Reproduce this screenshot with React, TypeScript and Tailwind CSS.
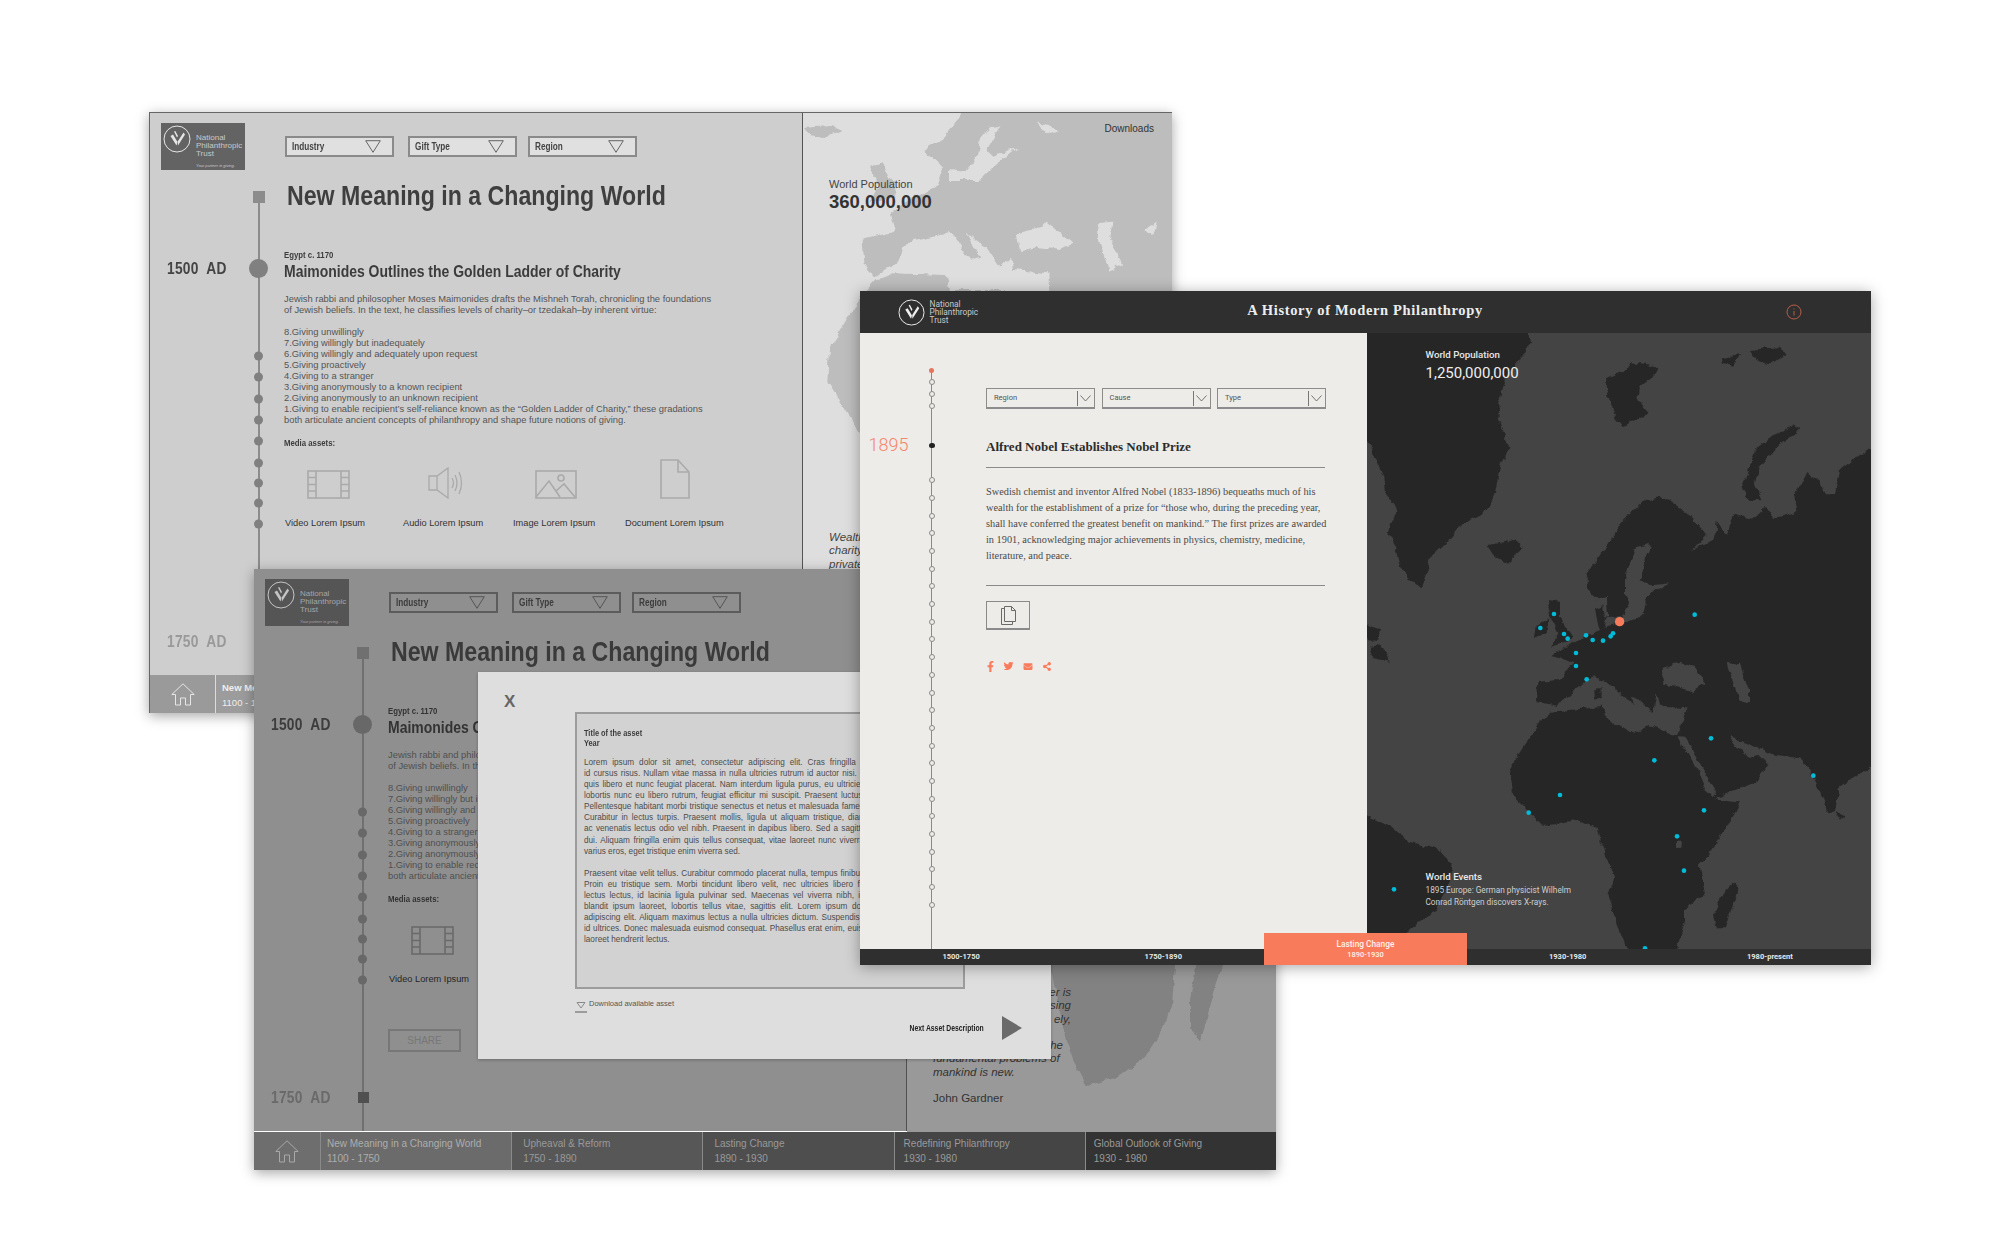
import { FaFacebookF, FaTwitter, FaEnvelope, FaShareAlt } from "react-icons/fa";

const ROBOTO = "[font-family:Roboto,sans-serif]";
const SERIF = "[font-family:'Liberation_Serif',serif]";
const NARROW_L = "w-max origin-left scale-x-[0.82] whitespace-nowrap font-bold";

type Tone = {
  panel: string; map: string; logoBox: string; logoText: string; logoStroke: string;
  ddBox: string; ddText: string; ddStroke: string; title: string; year: string; year2: string;
  sub: string; body: string; label: string; icon: string; line: string; dot: string; square: string; square2: string;
  rule: string; share: string; quote: string;
};

const LIGHT: Tone = {
  panel: "bg-[#cecece]", map: "bg-[#dedede]", logoBox: "bg-[#636363]", logoText: "text-[#c8c8c8]", logoStroke: "#e6e6e6",
  ddBox: "bg-[#e0e0e0] border-[#8a8a8a]", ddText: "text-[#444]", ddStroke: "#666",
  title: "text-[#3f3f3f]", year: "text-[#444]", year2: "text-[#999]", sub: "text-[#3c3c3c]", body: "text-[#555]", label: "text-[#333]", icon: "#aaaaaa",
  line: "bg-[#8c8c8c]", dot: "bg-[#808080]", square: "bg-[#8c8c8c]", square2: "bg-[#8c8c8c]", rule: "bg-[#555]", share: "border-[#999] text-[#999]", quote: "text-[#444]",
};
const DARK: Tone = {
  panel: "bg-[#8f8f8f]", map: "bg-[#999]", logoBox: "bg-[#555]", logoText: "text-[#a6a6a6]", logoStroke: "#c4c4c4",
  ddBox: "bg-[#8f8f8f] border-[#5c5c5c]", ddText: "text-[#3c3c3c]", ddStroke: "#555",
  title: "text-[#3a3a3a]", year: "text-[#3c3c3c]", year2: "text-[#6a6a6a]", sub: "text-[#333]", body: "text-[#505050]", label: "text-[#262626]", icon: "#6a6a6a",
  line: "bg-[#707070]", dot: "bg-[#686868]", square: "bg-[#707070]", square2: "bg-[#505050]", rule: "bg-[#505050]", share: "border-[#777] text-[#777]", quote: "text-[#333]",
};

function Mark({ stroke, size }: { stroke: string; size: number }) {
  return (
    <svg width={size} height={size} viewBox="0 0 28 28" className="shrink-0">
      <circle cx="14" cy="14" r="13" fill="none" stroke={stroke} strokeWidth="1" />
      <path d="M7.5 11 L10 9.5 L14.5 17 L13.5 20.5 Z" fill={stroke} />
      <path d="M20.5 7.5 L22 9.5 L15 20.5 L14.7 16.5 Z" fill={stroke} />
      <path d="M11 6.5 L12.3 6 L15 11 L14 12.5 Z" fill={stroke} />
    </svg>
  );
}

function Dropdown({ label, tone }: { label: string; tone: Tone }) {
  return (
    <div className={`flex h-[21px] w-[109px] items-center justify-between border-2 pl-[5px] pr-[11px] ${tone.ddBox}`}>
      <span className={`${NARROW_L} text-[10px] ${tone.ddText}`}>{label}</span>
      <svg width="16" height="13" viewBox="0 0 16 13">
        <path d="M0.7 0.7 H15.3 L8 12.3 Z" fill="none" stroke={tone.ddStroke} strokeWidth="1" />
      </svg>
    </div>
  );
}

function VideoIcon({ c }: { c: string }) {
  return (
    <svg width="43" height="29" viewBox="0 0 43 29" fill="none" stroke={c} strokeWidth="1.6">
      <rect x="1" y="1" width="41" height="27" />
      <path d="M9 1 V28 M34 1 V28 M1 7.5 H9 M1 14.5 H9 M1 21 H9 M34 7.5 H42 M34 14.5 H42 M34 21 H42" />
    </svg>
  );
}
function AudioIcon({ c }: { c: string }) {
  return (
    <svg width="37" height="32" viewBox="0 0 37 32" fill="none" stroke={c} strokeWidth="1.3">
      <path d="M1 9 H9 L20 1 V31 L9 23 H1 Z M9 9 V23" />
      <path d="M24 11 Q27 16 24 21 M27 8 Q31 16 27 24 M31 5 Q36 16 31 27" />
    </svg>
  );
}
function ImageIcon({ c }: { c: string }) {
  return (
    <svg width="42" height="29" viewBox="0 0 42 29" fill="none" stroke={c} strokeWidth="1.6">
      <rect x="1" y="1" width="40" height="27" />
      <path d="M1 27 L14 11 L25 27 M21 21 L29 14 L40 27" />
      <circle cx="26" cy="8" r="3" />
    </svg>
  );
}
function DocIcon({ c }: { c: string }) {
  return (
    <svg width="30" height="40" viewBox="0 0 30 40" fill="none" stroke={c} strokeWidth="1.6">
      <path d="M1 1 H18 L29 13 V39 H1 Z M18 1 V13 H29" />
    </svg>
  );
}
function HomeIcon({ c }: { c: string }) {
  return (
    <svg width="24" height="23" viewBox="0 0 24 23" fill="none" stroke={c} strokeWidth="1">
      <path d="M0.8 11.5 L12 0.8 L23.2 11.5 H19.5 V22 H14.5 V15 H9.5 V22 H4.5 V11.5 Z" />
    </svg>
  );
}

const SMALL_DOTS = [242.7, 264.3, 286.3, 307, 327.7, 349.7, 370.3, 390.3, 411.3];

function Timeline({ tone }: { tone: Tone }) {
  return (
    <>
      <div className={`absolute left-[108px] top-[78px] bottom-0 w-[2px] ${tone.line}`} />
      <div className={`absolute left-[103px] top-[78px] h-[12px] w-[12px] ${tone.square}`} />
      <div className={`absolute left-[103.5px] top-[523px] h-[11px] w-[11px] ${tone.square2}`} />
      <div className={`absolute left-[99px] top-[146px] h-[19px] w-[19px] rounded-full ${tone.dot}`} />
      {SMALL_DOTS.map((t) => (
        <div key={t} className={`absolute left-[104px] h-[9px] w-[9px] -translate-y-1/2 rounded-full ${tone.dot}`} style={{ top: t }} />
      ))}
      <div className={`absolute left-[16.5px] top-[146px] w-max origin-left scale-x-[0.81] text-[17px] font-bold leading-[20px] tracking-[0.3px] whitespace-pre ${tone.year}`}>1500  AD</div>
      <div className={`absolute left-[16.5px] top-[519px] w-max origin-left scale-x-[0.81] text-[17px] font-bold leading-[20px] tracking-[0.3px] whitespace-pre ${tone.year2}`}>1750  AD</div>
    </>
  );
}

function HistoryPanel({ tone }: { tone: Tone }) {
  return (
    <div className={`relative flex h-[562px] w-[653px] shrink-0 ${tone.panel}`}>
      <div className="relative h-full w-[134px] shrink-0">
        <Timeline tone={tone} />
        <div className={`relative ml-[11px] mt-[10px] flex h-[47px] w-[84px] flex-col justify-between py-[2px] pl-[2px] ${tone.logoBox}`}>
          <div className="flex items-start gap-[5px]">
            <Mark stroke={tone.logoStroke} size={28} />
            <div className={`mt-[9px] text-[8px] leading-[8px] ${tone.logoText}`}>National<br />Philanthropic<br />Trust</div>
          </div>
          <div className={`ml-[33px] text-[4px] italic leading-[5px] ${tone.logoText}`}>Your partner in giving.</div>
        </div>
      </div>
      <div className="min-w-0 flex-1">
        <div className="ml-px mt-[23px] flex">
          <Dropdown label="Industry" tone={tone} />
          <div className="ml-[14px]"><Dropdown label="Gift Type" tone={tone} /></div>
          <div className="ml-[11px]"><Dropdown label="Region" tone={tone} /></div>
        </div>
        <h1 className={`ml-[3px] mt-[24px] w-max origin-left scale-x-[0.857] text-[27px] font-bold leading-[30px] whitespace-nowrap ${tone.title}`}>New Meaning in a Changing World</h1>
        <div className={`mt-[37.5px] ${NARROW_L} text-[9.5px] leading-[11px] ${tone.sub}`}>Egypt c. 1170</div>
        <h2 className={`mt-[2.5px] w-max origin-left scale-x-[0.873] text-[16px] font-bold leading-[20px] whitespace-nowrap ${tone.sub}`}>Maimonides Outlines the Golden Ladder of Charity</h2>
        <div className={`mt-[11px] text-[9.4px] leading-[11.1px] whitespace-nowrap ${tone.body}`}>
          Jewish rabbi and philosopher Moses Maimonides drafts the Mishneh Torah, chronicling the foundations<br />
          of Jewish beliefs. In the text, he classifies levels of charity–or tzedakah–by inherent virtue:
          <div className="mt-[10.5px]">
            8.Giving unwillingly<br />
            7.Giving willingly but inadequately<br />
            6.Giving willingly and adequately upon request<br />
            5.Giving proactively<br />
            4.Giving to a stranger<br />
            3.Giving anonymously to a known recipient<br />
            2.Giving anonymously to an unknown recipient<br />
            1.Giving to enable recipient’s self-reliance known as the “Golden Ladder of Charity,” these gradations<br />
            both articulate ancient concepts of philanthropy and shape future notions of giving.
          </div>
        </div>
        <div className={`mt-[11px] ${NARROW_L} text-[9.5px] leading-[11px] ${tone.sub}`}>Media assets:</div>
        <div className="ml-px mt-[11px] flex">
          <div className="w-[80px]">
            <div className="flex h-[40px] items-end justify-center pl-[7px]"><VideoIcon c={tone.icon} /></div>
            <div className={`mt-[19px] text-[9.25px] leading-[11px] whitespace-nowrap ${tone.label}`}>Video Lorem Ipsum</div>
          </div>
          <div className="ml-[38px] w-[80px]">
            <div className="flex h-[40px] items-end justify-center pl-[7px]"><AudioIcon c={tone.icon} /></div>
            <div className={`mt-[19px] text-[9.25px] leading-[11px] whitespace-nowrap ${tone.label}`}>Audio Lorem Ipsum</div>
          </div>
          <div className="ml-[30px] w-[82px]">
            <div className="flex h-[40px] items-end justify-center pl-[4px]"><ImageIcon c={tone.icon} /></div>
            <div className={`mt-[19px] text-[9.25px] leading-[11px] whitespace-nowrap ${tone.label}`}>Image Lorem Ipsum</div>
          </div>
          <div className="ml-[30px] w-[99px]">
            <div className="flex h-[40px] items-end justify-center"><DocIcon c={tone.icon} /></div>
            <div className={`mt-[19px] text-[9.25px] leading-[11px] whitespace-nowrap ${tone.label}`}>Document Lorem Ipsum</div>
          </div>
        </div>
        <div className={`mt-[44px] flex h-[23px] w-[73px] items-center justify-center border-2 text-[10px] ${tone.share}`}>SHARE</div>
      </div>
      <div className={`absolute right-0 top-0 h-full w-px ${tone.rule}`} />
    </div>
  );
}

const QUOTE: [string, string][] = [
  ["Wealth", "er is"], ["charity", "sing"], ["private", "ely,"], ["", ""], ["", "he"],
];

function QuoteText({ tone }: { tone: Tone }) {
  return (
    <div className={`relative mt-[319px] ml-[26px] w-[138px] text-[11.5px] italic leading-[13.3px] ${tone.quote}`}>
      {QUOTE.map(([a, b], i) => (
        <div key={i} className={`flex h-[13.3px] justify-between ${i === 4 ? "w-[130px]" : ""}`}><span>{a}</span><span>{b}</span></div>
      ))}
      <div className="whitespace-nowrap">fundamental problems of</div>
      <div className="whitespace-nowrap">mankind is new.</div>
      <div className="mt-[13px] whitespace-nowrap not-italic">John Gardner</div>
    </div>
  );
}

function Rough({ id, freq, scale }: { id: string; freq: number; scale: number }) {
  return (
    <filter id={id} x="-5%" y="-5%" width="110%" height="110%">
      <feTurbulence type="fractalNoise" baseFrequency={freq} numOctaves={4} seed={4} />
      <feDisplacementMap in="SourceGraphic" scale={scale} xChannelSelector="R" yChannelSelector="G" />
    </filter>
  );
}

function WindowA() {
  const tone = LIGHT;
  return (
    <div className="absolute left-[149px] top-[112px] flex h-[601px] w-[1023px] flex-col border-l border-t border-[#666] shadow-[0_3px_12px_rgba(0,0,0,0.35)]">
      <div className="flex h-[562px] shrink-0">
        <HistoryPanel tone={tone} />
        <div className={`relative flex-1 overflow-hidden ${tone.map}`}>
          <svg className="absolute inset-0 h-full w-full" viewBox="803 113 369 562">
            <defs><Rough id="roughA" freq={0.03} scale={22} /></defs>
            <g transform="translate(780 100) scale(0.33333)" filter="url(#roughA)">
              <g fill="#bdbdbd">
                <path d="M560 -20 H1300 V620 H810 L805 520 L700 510 L690 470 L660 500 L620 440 L560 400 L600 470 L570 480 L515 395 L470 405 L400 420 L370 440 L350 490 L290 530 L250 490 L245 420 L345 395 L330 340 L400 290 L470 260 L490 200 L470 190 L430 150 L490 110 L540 50 Z" />
                <path d="M290 540 L340 520 L500 525 L510 570 L700 570 L240 1000 L145 850 L150 740 L235 600 Z" />
                <path d="M270 200 L310 190 L340 260 L350 290 L270 310 L300 260 Z" />
                <path d="M75 80 L150 75 L185 90 L130 115 L90 105 Z" />
              </g>
              <g fill="#dedede">
                <path d="M630 85 L660 80 L620 150 L640 170 L720 140 L650 190 L600 240 L510 240 L510 210 L555 215 L590 170 L600 120 Z" />
                <path d="M710 400 L780 385 L800 365 L880 430 L840 450 L770 440 L720 455 Z" />
                <path d="M950 370 L1000 365 L990 420 L1030 490 L985 510 L960 430 Z" />
                <path d="M1090 390 L1130 365 L1120 405 Z" />
                <path d="M770 60 L840 90 L800 100 Z" />
              </g>
            </g>
          </svg>
          <div className="relative flex h-full flex-col">
            <div className="mr-[18px] mt-[10px] self-end text-[10px] leading-[12px] text-[#333]">Downloads</div>
            <div className="ml-[26px] mt-[43px] text-[11px] leading-[13px] text-[#444]">World Population</div>
            <div className="ml-[26px] mt-px text-[18.5px] font-bold leading-[20px] text-[#333]">360,000,000</div>
            <QuoteText tone={tone} />
          </div>
        </div>
      </div>
      <div className="grid h-[38px] grid-cols-[65px_repeat(5,1fr)] gap-px bg-[#dcdcdc]">
        <div className="flex items-center justify-center bg-[#9a9a9a]"><HomeIcon c="#e6e6e6" /></div>
        <div className="bg-[#9c9c9c] pl-[6px] pt-[5px] text-[9.5px] leading-[15px] text-[#eee]">
          <div className="font-bold">New Meaning</div><div>1100 - 1750</div>
        </div>
        <div className="bg-[#999]" /><div className="bg-[#999]" /><div className="bg-[#999]" /><div className="bg-[#999]" />
      </div>
    </div>
  );
}

const NAV_B = [
  { t: "New Meaning in a Changing World", y: "1100 - 1750", c: "bg-[#6b6b6b] pl-[6px] text-[#adadad]" },
  { t: "Upheaval & Reform", y: "1750 - 1890", c: "bg-[#575757] pl-[11px] text-[#999]" },
  { t: "Lasting Change", y: "1890 - 1930", c: "bg-[#4e4e4e] pl-[11px] text-[#999]" },
  { t: "Redefining Philanthropy", y: "1930 - 1980", c: "bg-[#454545] pl-[9px] text-[#999]" },
  { t: "Global Outlook of Giving", y: "1930 - 1980", c: "bg-[#333] pl-[8px] text-[#999]" },
];

const LOREM_1 = [
  "Lorem ipsum dolor sit amet, consectetur adipiscing elit. Cras fringilla pellentesque mauris sed",
  "id cursus risus. Nullam vitae massa in nulla ultricies rutrum id auctor nisi. Integer sit amet mattis eu",
  "quis libero et nunc feugiat placerat. Nam interdum ligula purus, eu ultricies augue finibus vitae sed",
  "lobortis nunc eu libero rutrum, feugiat efficitur mi suscipit. Praesent luctus mauris eget elit semper",
  "Pellentesque habitant morbi tristique senectus et netus et malesuada fames ac turpis egestas donec",
  "Curabitur in lectus turpis. Praesent mollis, ligula ut aliquam tristique, diam ipsum tempor nulla, at",
  "ac venenatis lectus odio vel nibh. Praesent in dapibus libero. Sed a sagittis neque, vitae porta erat",
  "dui. Aliquam fringilla enim quis tellus consequat, vitae laoreet nunc viverra. Nullam at felis sed leo",
];
const LOREM_2 = [
  "Praesent vitae velit tellus. Curabitur commodo placerat nulla, tempus finibus neque ultricies non sed.",
  "Proin eu tristique sem. Morbi tincidunt libero velit, nec ultricies libero faucibus non. Quisque et",
  "lectus lectus, id lacinia ligula pulvinar sed. Maecenas vel viverra nibh, in tempus nisl. Aenean a",
  "blandit ipsum laoreet, lobortis tellus vitae, sagittis elit. Lorem ipsum dolor sit amet, consectetur",
  "adipiscing elit. Aliquam maximus lectus a nulla ultricies dictum. Suspendisse vel quam ac nisl porta",
  "id ultrices. Donec malesuada euismod consequat. Phasellus erat enim, euismod vitae mi sed, cursus",
];

function Modal() {
  return (
    <div className="absolute left-[224px] top-[103px] flex h-[387px] w-[573px] bg-[#dedede] shadow-[0_1px_3px_rgba(0,0,0,0.25)]">
      <div className="w-[97px] shrink-0 pl-[26px] pt-[21px] text-[17px] font-bold leading-[18px] text-[#666]">X</div>
      <div className="flex-1 pr-[29px] pt-[40px]">
        <div className="h-[277px] w-[390px] border-2 border-[#9c9c9c] bg-[#d2d2d2] pl-[7px] pr-[8px] pt-[13.5px] text-[#4c4c4c]">
          <div className={`${NARROW_L} text-[9px] leading-[10px] text-[#3c3c3c]`}>Title of the asset<br />Year</div>
          <div className="mt-[9.5px] text-[8.2px] leading-[11.08px]">
            {LOREM_1.map((l) => (
              <div key={l} className="whitespace-nowrap [text-align-last:justify]">{l}</div>
            ))}
            <div>varius eros, eget tristique enim viverra sed.</div>
          </div>
          <div className="mt-[11px] text-[8.2px] leading-[11.08px]">
            {LOREM_2.map((l) => (
              <div key={l} className="whitespace-nowrap [text-align-last:justify]">{l}</div>
            ))}
            <div>laoreet hendrerit lectus.</div>
          </div>
        </div>
        <div className="mt-[10px] flex h-[13px] items-start gap-[2px]">
          <svg width="12" height="12" viewBox="0 0 12 12" className="mt-[3px]">
            <path d="M2 0.5 H10 L6 6 Z" fill="none" stroke="#8a8a8a" strokeWidth="1" />
            <rect x="0" y="9" width="12" height="2" fill="#9c9c9c" />
          </svg>
          <span className="text-[7.5px] leading-[10px] text-[#555]">Download available asset</span>
        </div>
        <div className="mt-[4px] flex items-center justify-end gap-[18px]">
          <span className="w-max origin-right scale-x-[0.8] whitespace-nowrap text-[8.5px] font-bold text-[#222]">Next Asset Description</span>
          <svg width="20" height="24" viewBox="0 0 20 24"><path d="M0 0 L20 12 L0 24 Z" fill="#6a6a6a" /></svg>
        </div>
      </div>
    </div>
  );
}

function WindowB() {
  const tone = DARK;
  return (
    <div className="absolute left-[254px] top-[569px] flex h-[601px] w-[1022px] flex-col shadow-[0_3px_12px_rgba(0,0,0,0.35)]">
      <div className="flex h-[563px] shrink-0">
        <HistoryPanel tone={tone} />
        <div className={`relative flex-1 overflow-hidden ${tone.map}`}>
          <svg className="absolute inset-0 h-full w-full" viewBox="907 569 369 563">
            <defs><Rough id="roughB" freq={0.08} scale={6} /></defs>
            <g filter="url(#roughB)" fill="#828282">
              <path d="M1045 945 H1175 V965 L1172 1005 L1162 1030 L1145 1057 L1115 1078 L1087 1086 L1073 1060 L1064 1033 L1058 1000 Z" />
              <path d="M1200 945 H1222 V965 L1212 1000 L1200 1040 L1190 1030 L1190 1000 Z" />
            </g>
          </svg>
          <div className="relative flex h-full flex-col pt-[98px]">
            <QuoteText tone={tone} />
          </div>
        </div>
      </div>
      <div className="grid h-[38px] grid-cols-[66px_repeat(5,1fr)] gap-px bg-[#8a8a8a]">
        <div className="flex items-center justify-center bg-[#6e6e6e]"><HomeIcon c="#a8a8a8" /></div>
        {NAV_B.map((n) => (
          <div key={n.t} className={`pt-[4px] text-[10px] leading-[15px] whitespace-nowrap ${n.c}`}>
            <div>{n.t}</div><div>{n.y}</div>
          </div>
        ))}
      </div>
      <Modal />
    </div>
  );
}

const C_DOTS = [382.3, 394, 406, 480.3, 498, 515.7, 533.3, 551, 568.7, 586.3, 604, 621.7, 639.3, 657, 674.7, 692.5, 710.3, 728, 745.7, 763.3, 781, 798.7, 816.3, 834, 851.7, 869.3, 887, 905];

function SelectC({ label }: { label: string }) {
  return (
    <div className="flex h-[21px] w-[109px] items-center justify-between border border-b-2 border-[#8c8c8c] pl-[7px] pr-[3px]">
      <span className={`${ROBOTO} text-[7.5px] text-[#555]`}>{label}</span>
      <span className="flex h-[15px] items-center gap-[2px] border-l border-[#777] pl-[2px]">
        <svg width="11" height="7" viewBox="0 0 11 7"><path d="M0.5 0.5 L5.5 6 L10.5 0.5" fill="none" stroke="#666" strokeWidth="0.9" /></svg>
      </span>
    </div>
  );
}

function MapC() {
  const blue: [number, number][] = [
    [582, 1002], [541, 1044], [612, 1062], [623, 1076], [678, 1066], [698, 1080], [729, 1082], [752, 1069], [759, 1060], [1004, 1004],
    [648, 1119], [648, 1158], [680, 1198], [1053, 1375], [883, 1441], [600, 1545], [506, 1598], [1032, 1591], [951, 1669], [972, 1772], [102, 1828], [1360, 1487], [855, 2005],
  ];
  return (
    <svg className="absolute inset-0 h-full w-full" viewBox="1367 333 504 616">
      <defs><Rough id="roughC" freq={0.035} scale={20} /></defs>
      <g transform="translate(1360 280) scale(0.33333)">
        <g filter="url(#roughC)">
          <g fill="#282828">
            <path d="M-30 110 H500 L510 190 L480 240 L440 290 L430 320 L415 370 L420 420 L445 500 L420 560 L405 640 L370 700 L300 735 L260 790 L215 830 L185 925 L150 900 L120 860 L105 800 L85 760 L110 680 L75 640 L70 590 L20 480 L-30 470 Z" />
            <path d="M380 795 L420 790 L465 780 L488 805 L440 850 L400 825 Z" />
            <path d="M735 295 L800 270 L815 250 L860 255 L895 265 L880 290 L840 320 L835 360 L865 395 L855 415 L810 420 L795 445 L770 420 L740 340 Z" />
            <path d="M1085 235 L1140 225 L1120 260 L1090 250 Z" />
            <path d="M1170 210 L1260 200 L1280 225 L1230 250 L1190 240 Z" />
            <path d="M1310 435 L1320 450 L1260 490 L1200 560 L1185 610 L1205 660 L1170 665 L1145 625 L1165 570 L1195 500 L1240 465 L1290 445 Z" />
            <path d="M1590 480 V1458 H1532 L1440 1525 L1425 1590 L1405 1600 L1380 1545 L1355 1480 L1320 1435 L1250 1425 L1200 1405 L1150 1385 L1110 1365 L1130 1400 L1165 1435 L1195 1425 L1225 1455 L1180 1510 L1100 1540 L1065 1555 L1140 1565 L1100 1640 L1040 1730 L1020 1760 L1035 1840 L975 1890 L975 1920 L935 2070 L835 2070 L775 1950 L745 1840 L765 1790 L720 1690 L710 1640 L650 1620 L550 1638 L460 1550 L450 1465 L490 1400 L530 1340 L570 1295 L730 1280 L735 1310 L820 1360 L870 1335 L950 1365 L985 1285 L900 1280 L890 1240 L880 1300 L840 1260 L790 1215 L860 1265 L810 1250 L820 1275 L760 1220 L700 1190 L670 1210 L620 1250 L590 1280 L530 1270 L535 1205 L600 1200 L640 1150 L580 1125 L640 1085 L720 1050 L710 1020 L705 985 L730 975 L680 925 L680 880 L760 770 L790 720 L850 665 L900 650 L940 670 L1000 715 L1040 765 L990 815 L1030 790 L1065 775 L1070 725 L1100 765 L1120 700 L1175 720 L1215 680 L1240 715 L1310 695 L1300 650 L1340 575 L1375 600 L1395 640 L1425 640 L1440 570 L1500 525 Z" />
            <path d="M-30 1590 L50 1620 L110 1650 L130 1680 L240 1710 L275 1750 L270 1800 L230 1890 L190 1920 L135 1955 L100 2070 H-30 Z" />
            <path d="M1120 1810 L1135 1830 L1110 1900 L1095 1945 L1070 1945 L1062 1900 L1080 1850 Z" />
            <path d="M1432 1590 L1450 1610 L1440 1622 L1430 1610 Z" />
            <path d="M570 960 L600 965 L600 1010 L640 1070 L610 1090 L570 1100 L595 1060 L580 1030 L560 990 Z" />
            <path d="M530 1035 L565 1015 L560 1060 L525 1075 Z" />
            <path d="M-30 1015 L60 1045 L55 1080 L-30 1075 Z" />
            <path d="M30 1100 L60 1095 L90 1145 L40 1135 Z" />
            <path d="M705 1225 L722 1225 L722 1255 L708 1255 Z" />
          </g>
          <g fill="#444">
            <path d="M795 895 L825 805 L870 795 L850 850 L840 900 L880 915 L930 910 L880 935 L860 960 L850 1000 L830 1020 L730 1040 L740 1015 L790 1010 L810 970 L795 940 Z" />
            <path d="M705 960 L740 950 L745 1015 L735 1010 L730 975 Z" />
            <path d="M905 1165 L960 1145 L1000 1160 L1040 1210 L1000 1235 L950 1220 L910 1215 Z" />
            <path d="M1100 1150 L1140 1145 L1150 1190 L1170 1230 L1170 1270 L1135 1260 L1120 1210 Z" />
            <path d="M950 1368 L975 1370 L1060 1520 L1062 1552 L1040 1530 L1000 1450 Z" />
            <path d="M948 1685 L966 1685 L964 1706 L948 1707 Z" />
          </g>
        </g>
        <circle cx="779" cy="1025" r="14" fill="#f87c5c" />
        {blue.map(([x, y]) => (
          <circle key={`${x}-${y}`} cx={x} cy={y} r="7" fill="#00bcd9" />
        ))}
      </g>
    </svg>
  );
}

function WindowC() {
  return (
    <div className="absolute left-[860px] top-[291px] flex h-[674px] w-[1011px] flex-col bg-[#2f2f2f] shadow-[0_2px_14px_rgba(0,0,0,0.35)]">
      <header className="relative flex h-[42px] shrink-0 items-center pl-[38px]">
        <Mark stroke="#efefef" size={27} />
        <div className={`ml-[4.5px] ${ROBOTO} text-[8.3px] leading-[8.3px] text-[#c9c9c9]`}>National<br />Philanthropic<br />Trust</div>
        <h1 className={`-mt-[2px] ml-[269px] ${SERIF} text-[14.5px] font-bold tracking-[0.65px] text-[#ededed]`}>A History of Modern Philanthropy</h1>
        <svg className="ml-auto mr-[69px]" width="16" height="16" viewBox="0 0 16 16" fill="none" stroke="#b95e47" strokeWidth="1">
          <circle cx="8" cy="8" r="7" />
          <path d="M8 7 V11.5 M8 4.5 V5.5" />
        </svg>
      </header>
      <div className="flex min-h-0 flex-1">
        <div className="relative w-[507px] shrink-0 bg-[#edece8] pl-[126px] pt-[55px]">
          <div className="absolute left-[70.5px] top-[37px] bottom-0 w-[1.5px] bg-[#8a8a8a]" />
          <div className="absolute left-[69px] top-[35px] h-[5px] w-[5px] rounded-full bg-[#e8745a]" />
          <div className="absolute left-[69px] top-[109.5px] h-[5.5px] w-[5.5px] rounded-full bg-[#222]" />
          {C_DOTS.map((y) => (
            <div key={y} className="absolute left-[68.5px] h-[6px] w-[6px] -translate-y-1/2 rounded-full border border-[#8a8a8a] bg-[#edece8]" style={{ top: y - 333 }} />
          ))}
          <div className={`absolute left-[8.5px] top-[101px] ${ROBOTO} text-[18px] font-light leading-[22px] text-[#f5876d]`}>1895</div>
          <div className="flex w-[340px] justify-between">
            <SelectC label="Region" />
            <SelectC label="Cause" />
            <SelectC label="Type" />
          </div>
          <h2 className={`mt-[30px] ${SERIF} text-[13px] font-bold leading-[16px] text-[#2c2c2c]`}>Alfred Nobel Establishes Nobel Prize</h2>
          <div className="mt-[12px] h-px w-[339px] bg-[#8a8a8a]" />
          <p className={`mt-[16px] ${SERIF} text-[10.3px] leading-[16px] whitespace-nowrap text-[#4a4a4a]`}>
            Swedish chemist and inventor Alfred Nobel (1833-1896) bequeaths much of his<br />
            wealth for the establishment of a prize for “those who, during the preceding year,<br />
            shall have conferred the greatest benefit on mankind.” The first prizes are awarded<br />
            in 1901, acknowledging major achievements in physics, chemistry, medicine,<br />
            literature, and peace.
          </p>
          <div className="mt-[21px] h-px w-[339px] bg-[#8a8a8a]" />
          <div className="mt-[15px] flex h-[29px] w-[44px] items-center justify-center border border-b-2 border-[#8a8a8a]">
            <svg width="15" height="19" viewBox="0 0 15 19" fill="none" stroke="#6a6a6a" strokeWidth="1">
              <path d="M3.5 0.5 H10.5 L14.5 4.5 V15.5 H3.5 Z M10.5 0.5 V4.5 H14.5" />
              <path d="M3.5 2.5 H0.5 V18.5 H11.5 V15.5" />
            </svg>
          </div>
          <div className="ml-px mt-[30.5px] flex items-center text-[#f87c5c]">
            <FaFacebookF className="h-[11px] w-[7px]" />
            <FaTwitter className="ml-[8.5px] h-[10px] w-[11px]" />
            <FaEnvelope className="ml-[9.5px] h-[9px] w-[10px]" />
            <FaShareAlt className="ml-[9px] h-[9px] w-[10px]" />
          </div>
        </div>
        <div className="relative min-w-0 flex-1 bg-[#444]">
          <MapC />
          <div className={`relative flex h-full flex-col pl-[58.5px] ${ROBOTO} text-[#e8e8e8]`}>
            <div className="mt-[16px] text-[9.7px] font-medium leading-[12px]">World Population</div>
            <div className="mt-[2px] text-[15px] leading-[20px] text-[#eeeeee]">1,250,000,000</div>
            <div className="mt-[487px] text-[9.7px] font-medium leading-[13px]">World Events</div>
            <div className="mt-[0.5px] text-[8.25px] leading-[12.4px] text-[#cfcfcf]">1895 Europe: German physicist Wilhelm<br />Conrad Röntgen discovers X-rays.</div>
          </div>
        </div>
      </div>
      <div className={`grid h-[16px] shrink-0 grid-cols-5 ${ROBOTO} text-[7.5px] font-bold leading-[16px] text-[#e6e6e6]`}>
        <div className="text-center">1500-1750</div>
        <div className="text-center">1750-1890</div>
        <div className="z-10 -mt-[16px] h-[32px] bg-[#f87c5c] pt-[6px] text-center font-medium leading-[10px] text-[#fff0ea]"><span className="text-[8.3px]">Lasting Change</span><br />1890-1930</div>
        <div className="text-center">1930-1980</div>
        <div className="text-center">1980-present</div>
      </div>
    </div>
  );
}

export default function App() {
  return (
    <div className="relative h-[1244px] w-[2000px] overflow-hidden bg-white [font-family:'Liberation_Sans',sans-serif]">
      <WindowA />
      <WindowB />
      <WindowC />
    </div>
  );
}
